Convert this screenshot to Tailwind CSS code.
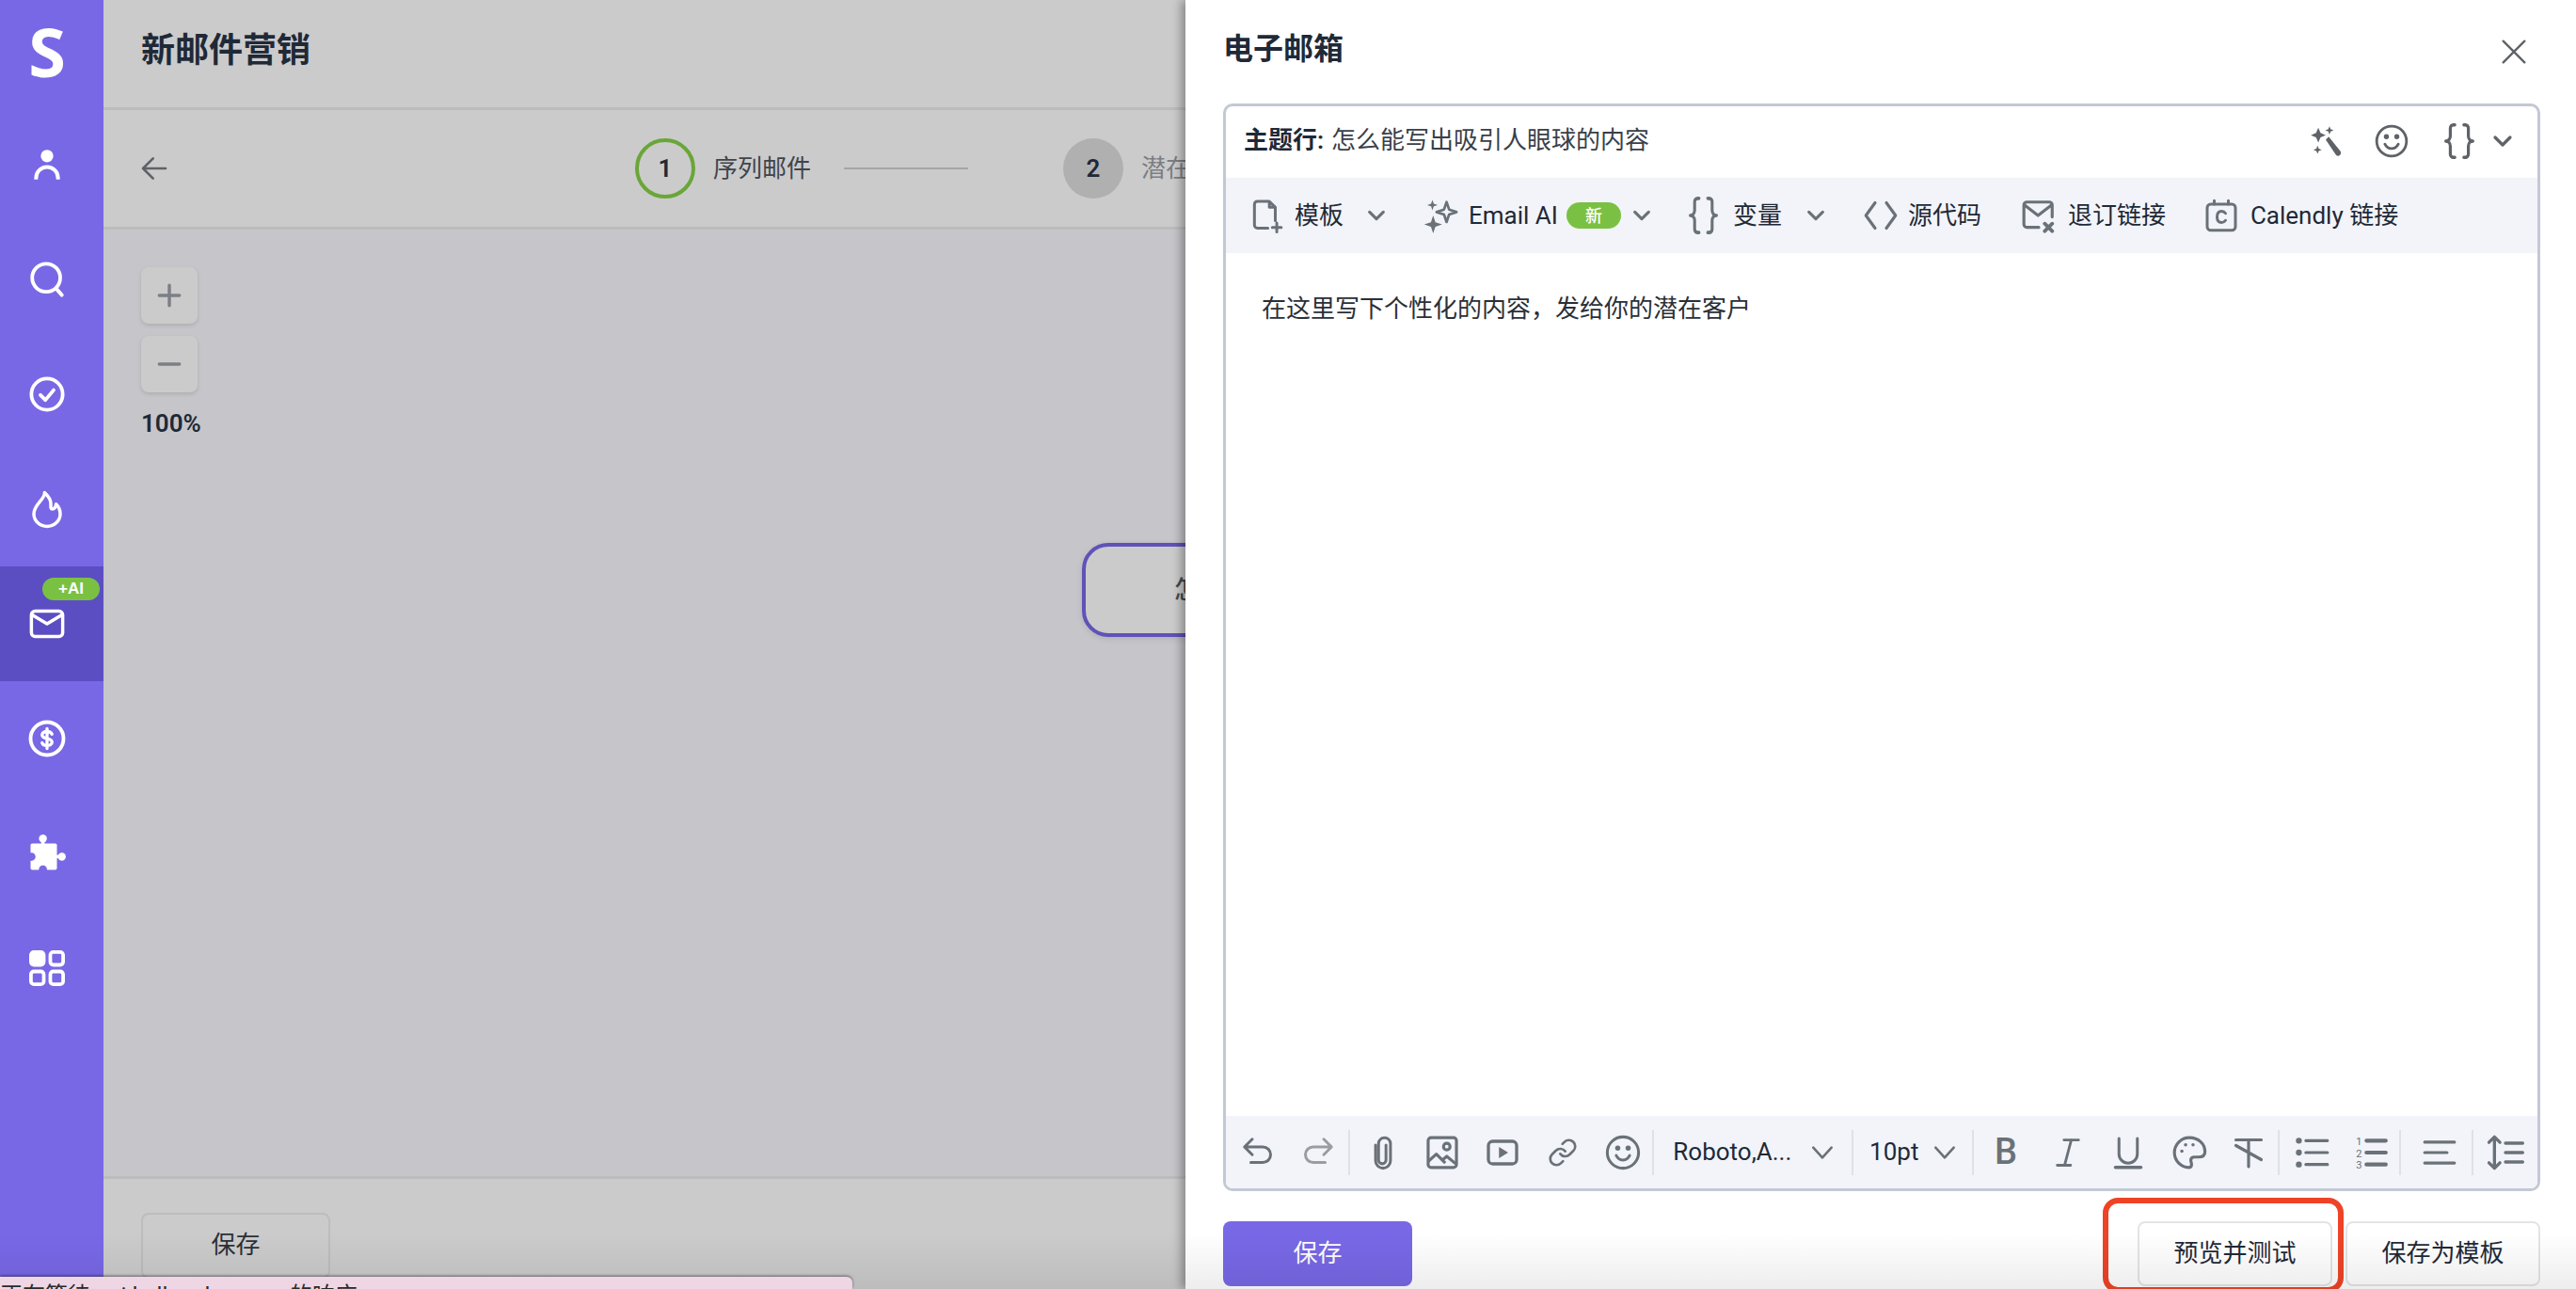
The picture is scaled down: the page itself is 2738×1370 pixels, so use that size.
<!DOCTYPE html>
<html lang="zh-CN">
<head>
    <meta charset="UTF-8">
    <title>新邮件营销</title>
    <script src="https://cdn.jsdelivr.net/npm/@tailwindcss/browser@4"></script>
</head>
<body class="m-0 overflow-hidden font-['Roboto','Noto_Sans_CJK_SC',sans-serif] text-[#1f2937]">
<div class="relative flex h-[1370px] w-[2738px] overflow-hidden bg-white">

    <!-- Sidebar -->
    <aside class="flex w-[110px] shrink-0 flex-col bg-[#7868e6] text-white">
        <div class="flex h-[114px] items-start justify-center pr-[10px] pt-[6px] font-['Open_Sans'] text-[72px] leading-[96px] font-bold">S</div>
        <div class="flex h-[122px] items-center justify-center pr-[10px]">
            <svg class="h-[40px] w-[40px]" viewBox="0 0 24 24" fill="none" stroke="currentColor" stroke-width="2.4"><circle cx="12" cy="6.5" r="4" fill="currentColor" stroke="none"/><path d="M5 21.5v-1a7 7 0 0 1 14 0v1"/></svg>
        </div>
        <div class="flex h-[122px] items-center justify-center pr-[10px]">
            <svg class="h-[42px] w-[42px]" viewBox="0 0 24 24" fill="none" stroke="currentColor" stroke-width="2.2" stroke-linecap="round"><circle cx="11.5" cy="11" r="8.5"/><path d="M17.5 17.5l3.5 4"/></svg>
        </div>
        <div class="flex h-[122px] items-center justify-center pr-[10px]">
            <svg class="h-[42px] w-[42px]" viewBox="0 0 24 24" fill="none" stroke="currentColor" stroke-width="2.2" stroke-linecap="round" stroke-linejoin="round"><circle cx="12" cy="12" r="9.5"/><path d="M8 12.5l3 3 5-6"/></svg>
        </div>
        <div class="flex h-[122px] items-center justify-center pr-[10px]">
            <svg class="h-[42px] w-[42px]" viewBox="0 0 24 24" fill="none" stroke="currentColor" stroke-width="2" stroke-linejoin="round"><path d="M10.5 2c.5 4-6.500 7-6.500 13a8 7.500 0 0 0 16 0c0-2.500-1-4.500-2.500-6-.3 2-1 3-2.200 3-1.800 0-.5-2.500-1.300-5-.6-2-2-3.500-3.500-5z"/></svg>
        </div>
        <div class="relative flex h-[122px] items-center justify-center bg-[#5b4ec2] pr-[10px]">
            <span class="absolute left-[45px] top-[12px] flex h-[24px] w-[61px] items-center justify-center rounded-full bg-[#7ac143] font-['Liberation_Sans'] text-[17px] font-bold text-white">+AI</span>
            <svg class="h-[38px] w-[38px]" viewBox="0 0 24 24" fill="none" stroke="currentColor" stroke-width="2.2" stroke-linejoin="round"><rect x="1.500" y="3.500" width="21" height="17" rx="2.500"/><path d="M2 6l10 6 10-6"/></svg>
        </div>
        <div class="flex h-[122px] items-center justify-center pr-[10px]">
            <svg class="h-[42px] w-[42px]" viewBox="0 0 24 24" fill="none" stroke="currentColor" stroke-width="2.200" stroke-linecap="round"><circle cx="12" cy="12" r="10"/><path stroke-width="1.900" d="M15 9.300c-.4-1-1.500-1.600-3-1.600-1.700 0-3 .8-3 2.100 0 2.800 6 1.500 6 4.300 0 1.300-1.300 2.100-3 2.100-1.500 0-2.600-.6-3-1.600M12 6v12"/></svg>
        </div>
        <div class="flex h-[122px] items-center justify-center pr-[10px]">
            <svg class="h-[42px] w-[42px]" viewBox="0 0 24 24" fill="currentColor"><rect x="2" y="6" width="16" height="16" rx="1"/><circle cx="9.500" cy="3" r="2.400"/><rect x="8.500" y="3" width="2" height="4"/><circle cx="21" cy="14" r="2.400"/><rect x="17" y="13" width="4" height="2"/><circle cx="2.500" cy="14" r="2.500" fill="#7868e6"/><circle cx="9.500" cy="21.800" r="2.500" fill="#7868e6"/></svg>
        </div>
        <div class="flex h-[122px] items-center justify-center pr-[10px]">
            <svg class="h-[38px] w-[38px]" viewBox="0 0 24 24" fill="none" stroke="currentColor" stroke-width="2.400"><rect x="1.200" y="1.200" width="8.600" height="8.600" rx="2" fill="currentColor"/><rect x="14.200" y="1.200" width="8.600" height="8.600" rx="2"/><rect x="1.200" y="14.200" width="8.600" height="8.600" rx="2"/><rect x="14.200" y="14.200" width="8.600" height="8.600" rx="2"/></svg>
        </div>
    </aside>

    <!-- Dimmed page behind the drawer -->
    <main class="flex min-w-0 flex-1 flex-col bg-[#cbcbcb]">
        <header class="flex h-[117px] shrink-0 items-center border-b-[3px] border-[#bcbcbc] pb-[6px] pl-[40px] text-[36px] font-semibold">新邮件营销</header>

        <div class="flex h-[127px] shrink-0 items-center border-b-[3px] border-[#bcbcbc] pl-[38px]">
            <svg class="h-[32px] w-[32px] text-[#5f6368]" viewBox="0 0 24 24" fill="none" stroke="currentColor" stroke-width="2" stroke-linecap="round" stroke-linejoin="round"><path d="M21 12H3M11 4l-8 8 8 8"/></svg>
            <div class="ml-[495px] flex h-[64px] w-[64px] shrink-0 items-center justify-center rounded-full border-[4px] border-[#6aa638] text-[26px] font-semibold">1</div>
            <span class="ml-[19px] whitespace-nowrap text-[26px] text-[#3f444b]">序列邮件</span>
            <div class="ml-[35px] h-[2px] w-[132px] shrink-0 bg-[#a5a5a5]"></div>
            <div class="ml-[101px] flex h-[64px] w-[64px] shrink-0 items-center justify-center rounded-full bg-[#b0b0b0] text-[26px] font-semibold">2</div>
            <span class="ml-[19px] whitespace-nowrap text-[26px] text-[#7b7e83]">潜在客户</span>
        </div>

        <section class="relative flex-1 bg-[#c5c5ca] pl-[40px] pt-[40px]">
            <div class="flex w-[60px] flex-col gap-[13px]">
                <div class="flex h-[60px] items-center justify-center rounded-[8px] bg-[#cbcbcb] shadow-[0_2px_4px_rgba(0,0,0,0.12)]">
                    <svg class="h-[32px] w-[32px] text-[#7c7f86]" viewBox="0 0 24 24" fill="none" stroke="currentColor" stroke-width="2.600" stroke-linecap="round"><path d="M12 4v16M4 12h16"/></svg>
                </div>
                <div class="flex h-[60px] items-center justify-center rounded-[8px] bg-[#cbcbcb] shadow-[0_2px_4px_rgba(0,0,0,0.12)]">
                    <svg class="h-[32px] w-[32px] text-[#7c7f86]" viewBox="0 0 24 24" fill="none" stroke="currentColor" stroke-width="2.600" stroke-linecap="round"><path d="M4 12h16"/></svg>
                </div>
            </div>
            <div class="mt-[17px] w-[60px] whitespace-nowrap text-center text-[26px] leading-[32px] font-semibold">100%</div>
            <div class="absolute left-[1040px] top-[333px] flex h-[100px] w-[560px] items-center rounded-[28px] border-[4px] border-[#5f52b8] bg-[#cbcbcb] pl-[94px] text-[26px] font-medium whitespace-nowrap text-[#45494f] shadow-[0_2px_6px_rgba(0,0,0,0.1)]">怎么能写出吸引人眼球的内容</div>
        </section>

        <footer class="h-[120px] shrink-0 border-t-[3px] border-[#bcbcbc] pl-[40px] pt-[36px]">
            <div class="flex h-[70px] w-[201px] items-center justify-center rounded-[8px] border-2 border-[#bdbdbd] pb-[2px] text-[26px] text-[#2b3038]">保存</div>
        </footer>
    </main>

    <!-- Drawer -->
    <div class="absolute bottom-0 left-[1260px] right-0 top-0 bg-white pl-[40px] pr-[38px] shadow-[-4px_0_10px_rgba(0,0,0,0.35)]">
        <div class="flex h-[110px] items-center justify-between pb-[6px]">
            <h2 class="text-[32px] font-semibold">电子邮箱</h2>
            <svg class="mr-[11px] mt-[6px] h-[34px] w-[34px] text-[#5f6368]" viewBox="0 0 24 24" fill="none" stroke="currentColor" stroke-width="1.700" stroke-linecap="round"><path d="M4 4l16 16M20 4L4 20"/></svg>
        </div>

        <div class="flex h-[1156px] flex-col overflow-hidden rounded-[10px] border-[3px] border-[#c3c8d4]">
            <div class="flex h-[76px] shrink-0 items-center pb-[3px] pl-[19px] pr-[25px] text-[26px]">
                <span class="font-semibold">主题行:</span>
                <span class="ml-[8px] text-[#3a4048]">怎么能写出吸引人眼球的内容</span>
                <svg class="ml-auto h-[38px] w-[38px] text-[#5f6368]" viewBox="0 0 24 24" fill="currentColor"><path d="M7 3l1.500 3.500L12 8 8.500 9.500 7 13 5.500 9.500 2 8l3.500-1.500zM14.500 2l.8 2 2 .8-2 .8-.8 2-.8-2-2-.8 2-.8zM6.500 15l.8 2 2 .8-2 .8-.8 2-.8-2-2-.8 2-.8z"/><path d="M12 11l2-2 8 10a2 2 0 0 1-3 2.500z"/></svg>
                <svg class="ml-[32px] h-[38px] w-[38px] text-[#5f6368]" viewBox="0 0 24 24" fill="none" stroke="currentColor" stroke-width="1.800" stroke-linecap="round"><circle cx="12" cy="12" r="10"/><path d="M7.500 14c1 2 2.600 3 4.500 3s3.500-1 4.500-3"/><circle cx="8.500" cy="9" r=".8" fill="currentColor"/><circle cx="15.500" cy="9" r=".8" fill="currentColor"/></svg>
                <svg class="ml-[37px] h-[38px] w-[32px] text-[#5f6368]" viewBox="2 1 20 22" preserveAspectRatio="none" fill="none" stroke="currentColor" stroke-width="2" stroke-linecap="round" stroke-linejoin="round"><path d="M9 2H8a2 2 0 0 0-2 2v5a3 3 0 0 1-3 3 3 3 0 0 1 3 3v5a2 2 0 0 0 2 2h1M15 2h1a2 2 0 0 1 2 2v5a3 3 0 0 0 3 3 3 3 0 0 0-3 3v5a2 2 0 0 1-2 2h-1"/></svg>
                <svg class="ml-[18px] h-[24px] w-[24px] text-[#5f6368]" viewBox="0 0 24 24" fill="none" stroke="currentColor" stroke-width="3.200" stroke-linecap="round" stroke-linejoin="round"><path d="M4 8l8 8 8-8"/></svg>
            </div>

            <!-- Top toolbar -->
            <div class="flex h-[80px] shrink-0 items-center bg-[#f2f4f9] pl-[24px] text-[26px] whitespace-nowrap">
                <svg class="h-[40px] w-[38px] text-[#6a7178]" viewBox="0 0 24 24" fill="none" stroke="currentColor" stroke-width="1.900" stroke-linecap="round" stroke-linejoin="round"><path d="M13 20.500H6a2 2 0 0 1-2-2v-14a2 2 0 0 1 2-2h8l4 4v9M14 2.500v4h4M19 17v6M16 20h6"/></svg>
                <span class="ml-[11px]">模板</span>
                <svg class="ml-[24px] h-[22px] w-[22px] text-[#6a7178]" viewBox="0 0 24 24" fill="none" stroke="currentColor" stroke-width="3.400" stroke-linecap="round" stroke-linejoin="round"><path d="M4 8l8 8 8-8"/></svg>
                <svg class="ml-[39px] h-[40px] w-[38px] text-[#6a7178]" viewBox="0 0 24 24"><path d="M15.500 3l1.700 5 5 1.700-5 1.700-1.700 5-1.700-5-5-1.700 5-1.700z" fill="none" stroke="currentColor" stroke-width="1.700" stroke-linejoin="round"/><path d="M6 1.500l.9 2.600 2.600.9-2.600.9L6 8.500l-.9-2.600L2.500 5l2.600-.9zM6.500 12l1.500 4.500 4.500 1.500-4.500 1.500-1.500 4.500L5 19.500.5 18 5 16.500z" fill="currentColor"/></svg>
                <span class="ml-[10px]">Email AI</span>
                <span class="ml-[9px] flex h-[28px] w-[58px] items-center justify-center rounded-full bg-[#7ac143] text-[18px] font-medium text-white">新</span>
                <svg class="ml-[11px] h-[22px] w-[22px] text-[#6a7178]" viewBox="0 0 24 24" fill="none" stroke="currentColor" stroke-width="3.400" stroke-linecap="round" stroke-linejoin="round"><path d="M4 8l8 8 8-8"/></svg>
                <svg class="ml-[39px] h-[40px] w-[31px] text-[#6a7178]" viewBox="2 1 20 22" preserveAspectRatio="none" fill="none" stroke="currentColor" stroke-width="2" stroke-linecap="round" stroke-linejoin="round"><path d="M9 2H8a2 2 0 0 0-2 2v5a3 3 0 0 1-3 3 3 3 0 0 1 3 3v5a2 2 0 0 0 2 2h1M15 2h1a2 2 0 0 1 2 2v5a3 3 0 0 0 3 3 3 3 0 0 0-3 3v5a2 2 0 0 1-2 2h-1"/></svg>
                <span class="ml-[16px]">变量</span>
                <svg class="ml-[25px] h-[22px] w-[22px] text-[#6a7178]" viewBox="0 0 24 24" fill="none" stroke="currentColor" stroke-width="3.400" stroke-linecap="round" stroke-linejoin="round"><path d="M4 8l8 8 8-8"/></svg>
                <svg class="ml-[40px] h-[36px] w-[36px] text-[#6a7178]" viewBox="0 0 24 24" fill="none" stroke="currentColor" stroke-width="2.100" stroke-linecap="round" stroke-linejoin="round"><path d="M8 3L1.500 12 8 21M16 3l6.500 9L16 21"/></svg>
                <span class="ml-[11px]">源代码</span>
                <svg class="ml-[42px] h-[38px] w-[38px] text-[#6a7178]" viewBox="0 0 24 24" fill="none" stroke="currentColor" stroke-width="2" stroke-linecap="round" stroke-linejoin="round"><path d="M12 20H4a2 2 0 0 1-2-2V5a2 2 0 0 1 2-2h15a2 2 0 0 1 2 2v8M2.500 5l9 7 9-7"/><path stroke-width="2.400" d="M16 17.500l5 5M21 17.500l-5 5"/></svg>
                <span class="ml-[12px]">退订链接</span>
                <svg class="ml-[41px] h-[40px] w-[36px] text-[#6a7178]" viewBox="0 0 24 24" fill="none" stroke="currentColor" stroke-width="2" stroke-linecap="round" stroke-linejoin="round"><rect x="2" y="4" width="20" height="18.500" rx="2.500"/><path d="M7 1.500V4M17 1.500V4M15 10.500c-.7-1-1.700-1.500-2.800-1.500-2 0-3.200 1.500-3.200 4s1.200 4 3.200 4c1.100 0 2.100-.5 2.800-1.500"/></svg>
                <span class="ml-[13px]">Calendly 链接</span>
            </div>

            <div class="flex-1 pl-[38px] pt-[40px] text-[26px] leading-[38px] text-[#2a3038]">在这里写下个性化的内容，发给你的潜在客户</div>

            <!-- Bottom toolbar -->
            <div class="flex h-[77px] shrink-0 items-center bg-[#f2f4f9] pl-[2px] text-[#6a7178]">
                <div class="flex h-[64px] w-[64px] items-center justify-center">
                    <svg class="h-[36px] w-[36px]" viewBox="0 0 24 24" fill="none" stroke="currentColor" stroke-width="2" stroke-linecap="round" stroke-linejoin="round"><path d="M8 2.500L2.500 8 8 13.500M3 8h12.500a5.500 5.500 0 0 1 0 11H7"/></svg>
                </div>
                <div class="flex h-[64px] w-[64px] items-center justify-center">
                    <svg class="h-[36px] w-[36px] text-[#9a9d9f]" viewBox="0 0 24 24" fill="none" stroke="currentColor" stroke-width="2" stroke-linecap="round" stroke-linejoin="round"><path d="M16 2.500L21.500 8 16 13.500M21 8H8.500a5.500 5.500 0 0 0 0 11H17"/></svg>
                </div>
                <div class="h-[48px] w-[2px] bg-[#dfe1e6]"></div>
                <div class="ml-[3px] flex h-[64px] w-[64px] items-center justify-center">
                    <svg class="h-[38px] w-[38px]" viewBox="0 0 24 24" fill="none" stroke="currentColor" stroke-width="1.900" stroke-linecap="round"><path d="M7 7v10.500a5 5 0 0 0 10 0V6a4 4 0 0 0-8 0v11a2.500 2.500 0 0 0 5 0V7"/></svg>
                </div>
                <div class="flex h-[64px] w-[63px] items-center justify-center">
                    <svg class="h-[38px] w-[38px]" viewBox="0 0 24 24" fill="none" stroke="currentColor" stroke-width="2" stroke-linejoin="round"><rect x="2.500" y="2" width="19" height="20" rx="2"/><circle cx="15" cy="8" r="2.200"/><path d="M2.500 18l5.500-5 6 6M12 17l3-2.500 6 5"/></svg>
                </div>
                <div class="flex h-[64px] w-[64px] items-center justify-center">
                    <svg class="h-[36px] w-[36px]" viewBox="0 0 24 24" fill="none" stroke="currentColor" stroke-width="2.200"><rect x="2" y="4" width="20" height="16" rx="3"/><path d="M9.500 8v8l6.500-4z" fill="currentColor" stroke="none"/></svg>
                </div>
                <div class="flex h-[64px] w-[65px] items-center justify-center">
                    <svg class="h-[32px] w-[32px]" viewBox="0 0 24 24" fill="none" stroke="currentColor" stroke-width="2" stroke-linecap="round" stroke-linejoin="round"><path d="M10 13a5 5 0 0 0 7.540.54l3-3a5 5 0 0 0-7.070-7.070l-1.720 1.710"/><path d="M14 11a5 5 0 0 0-7.540-.54l-3 3a5 5 0 0 0 7.070 7.070l1.710-1.710"/></svg>
                </div>
                <div class="flex h-[64px] w-[63px] items-center justify-center">
                    <svg class="h-[38px] w-[38px]" viewBox="0 0 24 24" fill="none" stroke="currentColor" stroke-width="1.900" stroke-linecap="round"><circle cx="12" cy="12" r="10.500"/><path d="M7.500 14c1 2 2.600 3 4.500 3s3.500-1 4.500-3"/><circle cx="8.500" cy="9" r=".8" fill="currentColor"/><circle cx="15.500" cy="9" r=".8" fill="currentColor"/></svg>
                </div>
                <div class="h-[48px] w-[2px] bg-[#dfe1e6]"></div>
                <span class="ml-[20px] w-[127px] whitespace-nowrap font-['Roboto'] text-[26px] text-[#1f2937]">Roboto,A...</span>
                <svg class="ml-[19px] h-[26px] w-[26px]" viewBox="0 0 24 24" fill="none" stroke="currentColor" stroke-width="2.400" stroke-linecap="round" stroke-linejoin="round"><path d="M3 7l9 10 9-10"/></svg>
                <div class="ml-[18px] h-[48px] w-[2px] bg-[#dfe1e6]"></div>
                <span class="ml-[17px] w-[53px] whitespace-nowrap font-['Roboto'] text-[26px] text-[#1f2937]">10pt</span>
                <svg class="ml-[14px] h-[26px] w-[26px]" viewBox="0 0 24 24" fill="none" stroke="currentColor" stroke-width="2.400" stroke-linecap="round" stroke-linejoin="round"><path d="M3 7l9 10 9-10"/></svg>
                <div class="ml-[16px] h-[48px] w-[2px] bg-[#dfe1e6]"></div>
                <div class="flex h-[64px] w-[68px] items-center justify-center font-['Roboto'] text-[38px] font-medium">B</div>
                <div class="flex h-[64px] w-[64px] items-center justify-center">
                    <svg class="h-[34px] w-[34px]" viewBox="0 0 24 24" fill="none" stroke="currentColor" stroke-width="2" stroke-linecap="round"><path d="M9 2.500h11M4 21.500h10M14.500 2.500l-5 19"/></svg>
                </div>
                <div class="flex h-[64px] w-[65px] items-center justify-center">
                    <svg class="h-[36px] w-[36px]" viewBox="0 0 24 24" fill="none" stroke="currentColor" stroke-width="2" stroke-linecap="round"><path d="M5.500 2v11a6.500 6.500 0 0 0 13 0V2"/><path stroke-width="2.400" d="M3 22.500h18"/></svg>
                </div>
                <div class="flex h-[64px] w-[65px] items-center justify-center">
                    <svg class="h-[38px] w-[38px]" viewBox="0 0 24 24" fill="none" stroke="currentColor" stroke-width="2" stroke-linejoin="round"><path d="M12 2C6.500 2 2 6.500 2 12s4.500 10 9.500 10c1.500 0 2-1 2-2 0-1.500-.5-1.500-.5-3 0-1.500 1-2 2.500-2h2.500c2.500 0 4.500-1 4.500-3.500C22.500 6 18 2 12 2z"/><circle cx="7" cy="11" r="1.100" fill="currentColor" stroke="none"/><circle cx="9.500" cy="6.800" r="1.100" fill="currentColor" stroke="none"/><circle cx="14.500" cy="6.800" r="1.100" fill="currentColor" stroke="none"/></svg>
                </div>
                <div class="flex h-[64px] w-[62px] items-center justify-center">
                    <svg class="h-[36px] w-[36px]" viewBox="0 0 24 24" fill="none" stroke="currentColor" stroke-width="2.100" stroke-linecap="round"><path d="M3 3h18M12 3v19M3 7l18 10"/></svg>
                </div>
                <div class="h-[48px] w-[2px] bg-[#dfe1e6]"></div>
                <div class="ml-[2px] flex h-[64px] w-[65px] items-center justify-center">
                    <svg class="h-[38px] w-[38px]" viewBox="0 0 24 24" fill="none" stroke="currentColor" stroke-width="2" stroke-linecap="round"><path d="M7.500 4H22M7.500 12H22M7.500 20H22"/><circle cx="2.800" cy="4" r="1" fill="currentColor"/><circle cx="2.800" cy="12" r="1" fill="currentColor"/><circle cx="2.800" cy="20" r="1" fill="currentColor"/></svg>
                </div>
                <div class="flex h-[64px] w-[60px] items-center justify-center">
                    <svg class="h-[38px] w-[38px]" viewBox="0 0 24 24" fill="none" stroke="currentColor" stroke-width="2.600" stroke-linecap="round"><path d="M9 4h13M9 12h13M9 20h13"/><text x="2" y="7" font-size="7" fill="currentColor" stroke="none">1</text><text x="2" y="15" font-size="7" fill="currentColor" stroke="none">2</text><text x="2" y="23" font-size="7" fill="currentColor" stroke="none">3</text></svg>
                </div>
                <div class="h-[48px] w-[2px] bg-[#dfe1e6]"></div>
                <div class="ml-[7px] flex h-[64px] w-[68px] items-center justify-center">
                    <svg class="h-[38px] w-[38px]" viewBox="0 0 24 24" fill="none" stroke="currentColor" stroke-width="2" stroke-linecap="round"><path d="M2 5h20M2 12h15M2 19h20"/></svg>
                </div>
                <div class="h-[48px] w-[2px] bg-[#dfe1e6]"></div>
                <div class="flex h-[64px] w-[68px] items-center justify-center">
                    <svg class="h-[40px] w-[40px]" viewBox="0 0 24 24" fill="none" stroke="currentColor" stroke-width="2" stroke-linecap="round" stroke-linejoin="round"><path d="M5 2v20M1.500 5.500L5 2l3.500 3.500M1.500 18.500L5 22l3.500-3.500M12 6h11M12 12h11M12 18h11"/></svg>
                </div>
            </div>
        </div>

        <div class="mt-[32px] flex items-start justify-between">
            <button class="flex h-[69px] w-[201px] items-center justify-center rounded-[8px] bg-[#7868e6] text-[26px] text-white">保存</button>
            <div class="flex gap-[14px]">
                <button class="flex h-[69px] w-[207px] items-center justify-center rounded-[8px] border-2 border-[#e4e4e4] bg-white text-[26px]">预览并测试</button>
                <button class="flex h-[69px] w-[207px] items-center justify-center rounded-[8px] border-2 border-[#e4e4e4] bg-white text-[26px]">保存为模板</button>
            </div>
        </div>
    </div>

    <!-- Annotation and window edge on top of everything -->
    <div class="pointer-events-none absolute bottom-[-4px] left-[2235px] h-[101px] w-[256px] rounded-[16px] border-[6px] border-[#ee4327]"></div>
    <div class="pointer-events-none absolute bottom-0 left-0 right-0 h-[60px] bg-linear-to-b from-transparent to-black/[0.07]"></div>
    <div class="absolute bottom-0 left-0 h-[13px] w-[906px] overflow-hidden rounded-tr-[6px] bg-[#efd6e4] pt-[5px] text-[24px] leading-[30px] whitespace-nowrap text-[#2a2a2a] shadow-[0_-1px_3px_rgba(0,0,0,0.5)]">正在等待 api.hellosales.com 的响应</div>
</div>
</body>
</html>
